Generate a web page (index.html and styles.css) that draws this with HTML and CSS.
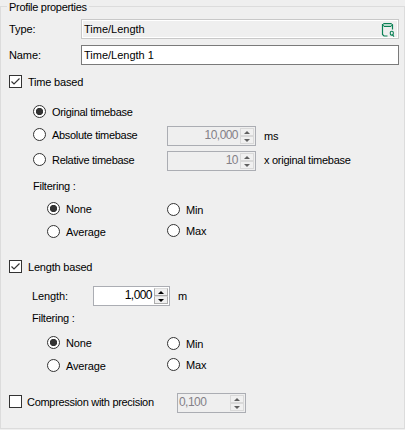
FILE: index.html
```html
<!DOCTYPE html>
<html lang="en">
<head>
    <meta charset="UTF-8">
    <meta name="viewport" content="width=device-width, initial-scale=1.0">
    <title>Profile properties</title>
    <link rel="stylesheet" href="styles.css">
</head>
<body>
    <fieldset class="group-box">
        <legend>Profile properties</legend>

        <div class="row field-row row-type">
            <span class="field-label">Type:</span>
            <div class="text-box readonly">
                <span>Time/Length</span>
                <svg class="db-icon" width="14" height="15" viewBox="0 0 14 15" fill="none" stroke="#0a8055">
                    <path d="M3 1.5H10L11.5 2.5L10 4.5H3L1.5 2.5Z" fill="#b5d8ca"/>
                    <path d="M1.5 2V12.5L3 14H6.5M11.5 2.5V7.5" stroke-width="1.2"/>
                    <rect x="9.3" y="9.3" width="3" height="3.8" rx="1.3" stroke-width="1.1"/>
                    <path d="M11.3 12.6L13 14.6" stroke-width="1.1"/>
                </svg>
            </div>
        </div>

        <div class="row field-row row-name">
            <span class="field-label">Name:</span>
            <div class="text-box">
                <span>Time/Length 1</span>
            </div>
        </div>

        <label class="row option row-time">
            <input type="checkbox" class="check" checked>
            <span>Time based</span>
        </label>

        <label class="row option indent row-original">
            <input type="radio" class="radio" name="timebase" checked>
            <span>Original timebase</span>
        </label>

        <div class="row indent row-absolute">
            <label class="option timebase">
                <input type="radio" class="radio" name="timebase">
                <span>Absolute timebase</span>
            </label>
            <div class="spinner disabled">
                <span class="value">10,000</span>
                <span class="buttons"><i class="up"></i><i class="down"></i></span>
            </div>
            <span class="unit">ms</span>
        </div>

        <div class="row indent row-relative">
            <label class="option timebase">
                <input type="radio" class="radio" name="timebase">
                <span>Relative timebase</span>
            </label>
            <div class="spinner disabled">
                <span class="value">10</span>
                <span class="buttons"><i class="up"></i><i class="down"></i></span>
            </div>
            <span class="unit unit-text">x original timebase</span>
        </div>

        <div class="row indent row-filtering">Filtering :</div>

        <div class="filters">
            <div class="filter-col">
                <label class="option"><input type="radio" class="radio" name="time-filter" checked><span>None</span></label>
                <label class="option"><input type="radio" class="radio" name="time-filter"><span>Average</span></label>
            </div>
            <div class="filter-col narrow">
                <label class="option"><input type="radio" class="radio" name="time-filter"><span>Min</span></label>
                <label class="option"><input type="radio" class="radio" name="time-filter"><span>Max</span></label>
            </div>
        </div>

        <label class="row option row-length-based">
            <input type="checkbox" class="check" checked>
            <span>Length based</span>
        </label>

        <div class="row indent row-length">
            <span class="length-label">Length:</span>
            <div class="spinner spinner-length">
                <span class="value">1,000</span>
                <span class="buttons"><i class="up"></i><i class="down"></i></span>
            </div>
            <span class="unit">m</span>
        </div>

        <div class="row indent row-filtering length-filtering">Filtering :</div>

        <div class="filters length-filters">
            <div class="filter-col">
                <label class="option"><input type="radio" class="radio" name="length-filter" checked><span>None</span></label>
                <label class="option"><input type="radio" class="radio" name="length-filter"><span>Average</span></label>
            </div>
            <div class="filter-col narrow">
                <label class="option"><input type="radio" class="radio" name="length-filter"><span>Min</span></label>
                <label class="option"><input type="radio" class="radio" name="length-filter"><span>Max</span></label>
            </div>
        </div>

        <div class="row row-compression">
            <label class="option compression">
                <input type="checkbox" class="check">
                <span>Compression with precision</span>
            </label>
            <div class="spinner spinner-precision disabled">
                <span class="value">0,100</span>
                <span class="buttons"><i class="up"></i><i class="down"></i></span>
            </div>
        </div>
    </fieldset>
</body>
</html>
```
FILE: styles.css
```css
:root {
    --bg: #efefef;
    --text: #000;
    --group-border: #dcdcdc;
    --control-border: #333333;
    --spin-border: #abadb3;
}

* {
    margin: 0;
    padding: 0;
    box-sizing: border-box;
}

body {
    background-color: var(--bg);
    color: var(--text);
    font-family: "Liberation Sans", Arial, sans-serif;
    font-size: 11px;
    line-height: 13px;
    letter-spacing: -0.1px;
    white-space: nowrap;
}

.group-box {
    width: 405px;
    height: 429px;
    border: 1px solid var(--group-border);
}

.group-box legend {
    height: 13px;
    margin-left: 6px;
    padding: 1px 2px 0;
    letter-spacing: -0.3px;
}

.row {
    display: flex;
    align-items: center;
    padding-left: 8px;
}

.indent {
    padding-left: 32px;
}

.field-row {
    height: 20px;
    padding-right: 5px;
}

.row-type { margin-top: 6px; }
.row-name { margin-top: 6px; }
.row-time { margin-top: 10px; }
.row-original { margin-top: 17px; }
.row-absolute { margin-top: 8px; }
.row-relative { margin-top: 5px; }
.row-filtering { margin-top: 9px; letter-spacing: -0.25px; }
.row-length-based { margin-top: 22px; }
.row-length { margin-top: 13px; padding-left: 31px; }
.length-filtering { margin-top: 6px; padding-left: 31px; }
.row-compression { margin-top: 21px; }

/* Text fields */
.field-label {
    width: 72px;
}

.text-box {
    display: flex;
    flex: 1;
    align-items: center;
    justify-content: space-between;
    height: 20px;
    padding: 0 3px 0 2px;
    border: 1px solid #7a7a7a;
    background-color: #fff;
    letter-spacing: 0;
}

.text-box.readonly {
    border-color: #c8c8c8;
    background-color: var(--bg);
    box-shadow: inset 0 0 0 1px #fff;
}

/* Checkboxes and radios */
.option {
    display: flex;
    align-items: center;
    gap: 6px;
    height: 13px;
    letter-spacing: -0.3px;
}

.option span {
    margin-top: 2px;
}

.check,
.radio {
    appearance: none;
    flex: none;
    width: 13px;
    height: 13px;
    border: 1px solid var(--control-border);
    background-color: #fff;
}

.check:checked {
    background: #fff url("data:image/svg+xml,%3Csvg xmlns='http://www.w3.org/2000/svg' width='11' height='11'%3E%3Cpath d='M1.5 5.5L4 8L9.5 2.5' fill='none' stroke='%23333' stroke-width='1.2'/%3E%3C/svg%3E");
}

.radio {
    border-radius: 50%;
}

.radio:checked {
    background: radial-gradient(circle, #333 3.3px, #fff 4px);
}

.row-time,
.row-length-based {
    letter-spacing: -0.2px;
}

.timebase {
    width: 134px;
    margin-top: -3px;
}

/* Numeric inputs */
.spinner {
    display: flex;
    width: 89px;
    height: 20px;
    border: 1px solid var(--spin-border);
    background-color: #fff;
}

.spinner .value {
    flex: 1;
    padding-right: 2px;
    font-size: 12px;
    line-height: 17px;
    letter-spacing: -0.55px;
    text-align: right;
}

.spinner .buttons {
    display: flex;
    flex-direction: column;
    width: 15px;
    height: 18px;
    padding: 1px 1px 1px 0;
    background-color: #fff;
}

.spinner i {
    display: flex;
    flex: 1;
    align-items: center;
    justify-content: center;
    border: 1px solid #adadad;
    border-top-color: #dcdcdc;
    background-color: #f0f0f0;
}

.spinner i::before {
    content: "";
    border: 3px solid transparent;
}

.spinner .up::before {
    border-top: 0;
    border-bottom-color: #000;
}

.spinner .down::before {
    border-bottom: 0;
    border-top-color: #000;
}

.spinner.disabled,
.spinner.disabled .buttons {
    background-color: var(--bg);
}

.spinner.disabled .value {
    color: #838087;
}

.spinner.disabled i {
    border-color: #d9d9d9;
}

.spinner.disabled .up::before {
    border-bottom-color: #606060;
}

.spinner.disabled .down::before {
    border-top-color: #606060;
}

.spinner-length {
    width: 77px;
}

.spinner-precision {
    width: 69px;
}

.spinner-precision .value {
    padding-left: 1px;
    text-align: left;
}

.unit {
    margin-left: 8px;
}

.unit-text {
    margin-top: -2px;
    letter-spacing: -0.27px;
}

.length-label {
    width: 61px;
}

.compression {
    width: 168px;
    margin-top: -3px;
    gap: 5px;
}

/* Filter choices */
.filters {
    display: flex;
    margin-top: 9px;
    padding-left: 46px;
}

.length-filters {
    margin-top: 11px;
}

.filter-col {
    display: flex;
    flex-direction: column;
    gap: 10px;
    width: 120px;
}

.filter-col.narrow {
    gap: 8px;
    padding-top: 1px;
}

.filters .option {
    letter-spacing: -0.15px;
}
```
